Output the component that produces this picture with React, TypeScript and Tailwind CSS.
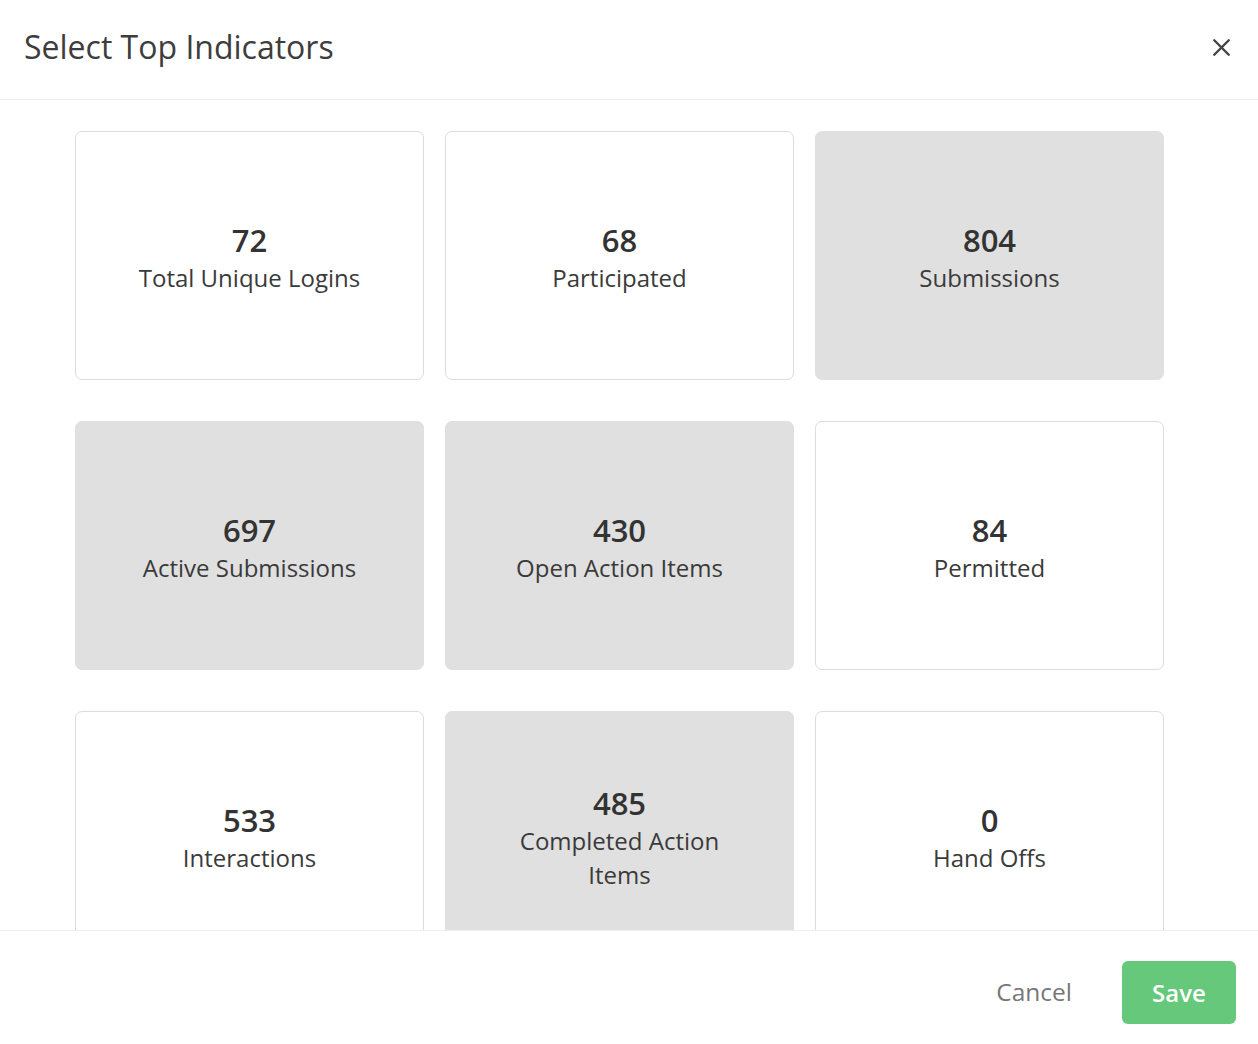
import { X } from "lucide-react";

const items = [
  { value: "72", label: "Total Unique Logins", selected: false },
  { value: "68", label: "Participated", selected: false },
  { value: "804", label: "Submissions", selected: true },
  { value: "697", label: "Active Submissions", selected: true },
  { value: "430", label: "Open Action Items", selected: true },
  { value: "84", label: "Permitted", selected: false },
  { value: "533", label: "Interactions", selected: false },
  { value: "485", label: "Completed Action Items", selected: true },
  { value: "0", label: "Hand Offs", selected: false },
];

export default function App() {
  return (
    <div
      className="w-[1258px] h-[1044px] bg-white flex flex-col text-[#333]"
      style={{ fontFamily: '"Open Sans", sans-serif' }}
    >
      <header className="h-[100px] shrink-0 flex items-center justify-between pl-[24px] pr-[22px] border-b border-[#f0f0f0]">
        <h1 className="text-[32px] text-[#3d3d3d] pb-[5px]">Select Top Indicators</h1>
        <button className="text-[#444] pb-[4px]">
          <X size={29} strokeWidth={2} />
        </button>
      </header>

      <div className="flex-1 overflow-hidden pl-[75px] pt-[31px]">
        <div className="grid grid-cols-[349px_349px_349px] gap-x-[21px] gap-y-[41px]">
          {items.map((it) => (
            <button
              key={it.label}
              className={`h-[249px] rounded-[7px] border flex flex-col items-center justify-center px-10 pt-[2px] ${
                it.selected ? "bg-[#e0e0e0] border-[#e0e0e0]" : "bg-white border-[#dcdcdc]"
              }`}
            >
              <span className="text-[31px] font-semibold leading-[42px] text-[#333]">{it.value}</span>
              <span className="text-[24px] leading-[34px] text-[#3a3a3a] max-w-[240px]">{it.label}</span>
            </button>
          ))}
        </div>
      </div>

      <footer className="h-[114px] shrink-0 border-t border-[#f0f0f0] flex items-start justify-end pt-[30px] pr-[22px] gap-[50px]">
        <button className="h-[63px] text-[24.5px] text-[#777]">Cancel</button>
        <button className="h-[63px] w-[114px] rounded-[6px] bg-[#66c87a] text-white text-[24px] font-semibold">
          Save
        </button>
      </footer>
    </div>
  );
}
